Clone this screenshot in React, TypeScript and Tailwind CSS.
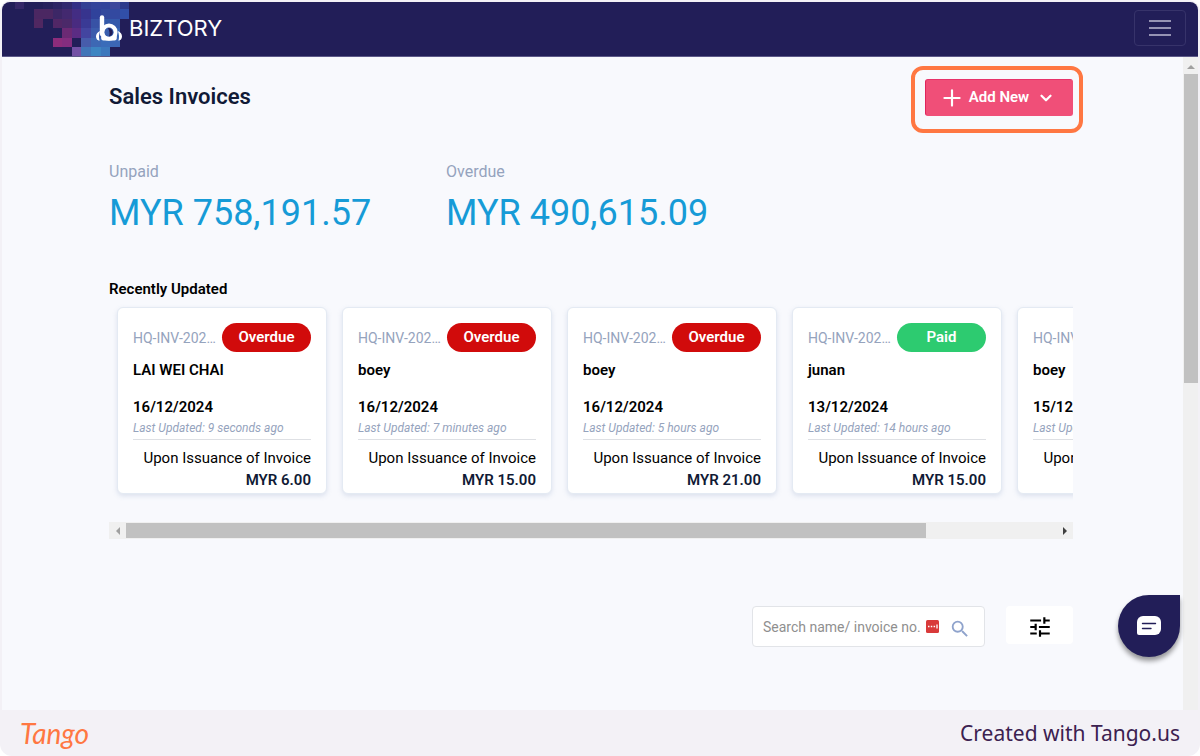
import { ChevronDown, Plus } from "lucide-react";
import { MdSearch, MdTune } from "react-icons/md";

type Invoice = {
  number: string;
  status: "Overdue" | "Paid";
  customer: string;
  date: string;
  updated: string;
  amount: string;
};

const invoices: Invoice[] = [
  { number: "HQ-INV-202412-0012", status: "Overdue", customer: "LAI WEI CHAI", date: "16/12/2024", updated: "9 seconds ago", amount: "MYR 6.00" },
  { number: "HQ-INV-202412-0011", status: "Overdue", customer: "boey", date: "16/12/2024", updated: "7 minutes ago", amount: "MYR 15.00" },
  { number: "HQ-INV-202412-0010", status: "Overdue", customer: "boey", date: "16/12/2024", updated: "5 hours ago", amount: "MYR 21.00" },
  { number: "HQ-INV-202412-0009", status: "Paid", customer: "junan", date: "13/12/2024", updated: "14 hours ago", amount: "MYR 15.00" },
  { number: "HQ-INV-202412-0008", status: "Paid", customer: "boey", date: "15/12/2024", updated: "15 hours ago", amount: "MYR 15.00" },
];

// [column, row, colour] of each square in the header mosaic
const mosaic: [number, number, string][] = [
  [1, 0, "#352767"], [4, 0, "#26205c"], [5, 0, "#2c2364"], [6, 0, "#31286e"], [7, 0, "#332e85"], [8, 0, "#333f94"], [9, 0, "#34439a"], [10, 0, "#32439a"], [11, 0, "#3d479c"], [12, 0, "#2c3a8c"],
  [3, 1, "#4b2762"], [4, 1, "#4b2762"], [5, 1, "#3c2766"], [6, 1, "#43296f"], [7, 1, "#432d83"], [8, 1, "#37348e"], [9, 1, "#30429b"], [10, 1, "#33499d"], [11, 1, "#3349a0"], [12, 1, "#314fa8"],
  [3, 2, "#502761"], [5, 2, "#512766"], [6, 2, "#4b2969"], [7, 2, "#492b80"], [8, 2, "#3a3a95"], [9, 2, "#3852a5"], [10, 2, "#3459a8"], [11, 2, "#3459ab"],
  [6, 3, "#6b2a74"], [7, 3, "#5b2c83"], [8, 3, "#4345a0"], [9, 3, "#3c5cac"], [10, 3, "#3561b0"], [11, 3, "#3564b4"],
  [5, 4, "#8c2c7b"], [6, 4, "#832d7f"], [8, 4, "#475cab"], [9, 4, "#3d68b4"], [10, 4, "#3a6cb9"], [11, 4, "#3c66b5"],
  [7, 5, "#7351a5"], [8, 5, "#4175b8"], [9, 5, "#3d85c2"], [10, 5, "#3c78bd"],
];

function Mosaic() {
  return (
    <svg
      className="absolute left-0 top-0 h-full w-[130px]"
      viewBox="2 2 130 54"
      preserveAspectRatio="xMinYMin slice"
      shapeRendering="crispEdges"
      aria-hidden="true"
    >
      {mosaic.map(([col, row, fill]) => (
        <rect key={`${col}-${row}`} x={5 + col * 9.56} y={-0.5 + row * 9.56} width="9.7" height="9.7" fill={fill} />
      ))}
    </svg>
  );
}

function BiztoryMark() {
  return (
    <svg className="h-7 w-7" viewBox="0 0 28 28" fill="none" aria-hidden="true">
      <path d="M5.200 17C2.400 18 1 20 1 22.500c0 2.300 1.400 4 3.600 4.300C3.600 24 3.800 20 5.200 17z" fill="#fff" />
      <path d="M22.800 17c2.800 1 4.200 3 4.200 5.500 0 2.300-1.400 4-3.600 4.300 1-2.800.8-6.800-.6-9.800z" fill="#fff" />
      <path d="M7 3.500V20" stroke="#fff" strokeWidth="4.400" strokeLinecap="round" />
      <circle cx="14" cy="18.200" r="6.600" stroke="#fff" strokeWidth="4" />
      <path d="M7 20c-1.400 3-1.200 6.500 1.500 6.500h11c2.700 0 2.900-3.500 1.500-6.500l-3 2.500h-8z" fill="#fff" />
      <circle cx="14" cy="18.200" r="4.200" fill="#3a5fae" />
      <path d="M13 14a4.200 4.200 0 0 1 1 8.400c1-2.800.6-5.400-1-8.400z" fill="#221e58" />
    </svg>
  );
}

function InvoiceCard({ invoice }: { invoice: Invoice }) {
  return (
    <li className="h-[187px] w-[210px] shrink-0 rounded-md border border-[#e4eaf3] bg-white px-[15px] pt-[15px] text-[15px] leading-[22px] text-black shadow-[0_2px_5px_rgba(120,140,180,0.22)]">
      <div className="flex items-center gap-[3px]">
        <span className="min-w-0 flex-1 truncate text-sm text-[#95a3bd]">{invoice.number}</span>
        <span
          className={`w-[89px] shrink-0 rounded-full text-center font-semibold leading-[29px] text-white ${
            invoice.status === "Paid" ? "bg-[#2dcb70]" : "bg-[#d10b0b]"
          }`}
        >
          {invoice.status}
        </span>
      </div>
      <p className="mt-[7px] font-semibold">{invoice.customer}</p>
      <p className="mt-[15px] font-semibold">{invoice.date}</p>
      <p className="border-b border-[#dee0e4] text-xs italic leading-[21px] text-[#95a3bd]">Last Updated: {invoice.updated}</p>
      <p className="mt-[7px] text-right">Upon Issuance of Invoice</p>
      <p className="text-right font-semibold text-[#101a35]">{invoice.amount}</p>
    </li>
  );
}

function Stat({ label, amount }: { label: string; amount: string }) {
  return (
    <div className="w-[337px]">
      <p className="text-base leading-6 text-[#95a3bd]">{label}</p>
      <p className="mt-1 text-4xl leading-[50px] text-[#169bd7]">{amount}</p>
    </div>
  );
}

export default function App() {
  return (
    <div className="flex min-h-screen flex-col overflow-hidden rounded-xl bg-[#f3f1f6] px-0.5 pt-0.5 font-['Roboto',sans-serif]">
      <header className="relative flex h-[55px] items-center justify-between overflow-hidden rounded-t-lg border-b border-[#5d5989] bg-[#221e58] pb-0.5 pl-[93px] pr-3">
        <Mosaic />
        <a href="#" className="relative flex items-center gap-1.5 text-white" aria-label="BIZTORY">
          <BiztoryMark />
          <span className="font-['Inter',sans-serif] text-[22px] leading-7">BIZTORY</span>
        </a>
        <button type="button" aria-label="Menu" className="flex h-9 w-[52px] flex-col items-center justify-center gap-[5px] rounded border border-[#37336a]">
          <span className="h-0.5 w-[22px] bg-[#9693b4]" />
          <span className="h-0.5 w-[22px] bg-[#9693b4]" />
          <span className="h-0.5 w-[22px] bg-[#9693b4]" />
        </button>
      </header>

      <div className="flex flex-1 bg-[#f8f9fd]">
        <main className="min-w-0 flex-1 pl-[107px] pr-[110px]">
          <div className="flex items-start justify-between">
            <h1 className="mt-6 text-[22px] font-semibold leading-8 text-[#111a36]">Sales Invoices</h1>
            <div className="-mr-2.5 mt-[9px] rounded-xl border-4 border-[#ff7742] pb-[13px] pl-2.5 pr-1.5 pt-[9px]">
              <button type="button" className="flex h-[37px] w-[148px] items-center justify-center gap-1 rounded-[3px] border border-[#f04f78] border-l-[#e0245c] border-t-[#e8336a] bg-[#f04f78] pr-1 text-[15px] font-semibold text-white">
                <Plus size={26} strokeWidth={2} />
                Add New
                <ChevronDown size={18} strokeWidth={3} className="ml-1" />
              </button>
            </div>
          </div>

          <section className="mt-[27px] flex">
            <Stat label="Unpaid" amount="MYR 758,191.57" />
            <Stat label="Overdue" amount="MYR 490,615.09" />
          </section>

          <section className="mt-10">
            <h2 className="text-[15px] font-semibold leading-[22px] text-black">Recently Updated</h2>
            <ul className="flex gap-[15px] overflow-hidden px-2 pb-7 pt-[7px]">
              {invoices.map((invoice) => (
                <InvoiceCard key={invoice.number} invoice={invoice} />
              ))}
            </ul>
            <div className="flex h-[17px] items-center bg-[#f0f0f0]" aria-hidden="true">
              <svg className="h-2 w-[17px]" viewBox="0 0 17 8"><path d="M11 0v8L7 4z" fill="#a0a0a0" /></svg>
              <div className="flex-1">
                <div className="h-[15px] w-[86%] bg-[#c1c1c1]" />
              </div>
              <svg className="h-2 w-[17px]" viewBox="0 0 17 8"><path d="M7 0v8l4-4z" fill="#404040" /></svg>
            </div>
          </section>

          <form className="mt-[67px] flex items-start justify-end gap-[21px]" onSubmit={(e) => e.preventDefault()}>
            <div className="flex h-[41px] w-[233px] items-center rounded border border-[#e2e4e8] bg-white pl-2.5 pr-[13px]">
              <input
                type="text"
                aria-label="Search name or invoice number"
                placeholder="Search name/ invoice no."
                className="w-[163px] text-sm text-black outline-none placeholder:text-[#8f8f8f]"
              />
              <svg className="h-[13px] w-[13px] shrink-0" viewBox="0 0 13 13" aria-hidden="true">
                <rect width="13" height="13" rx="1.500" fill="#d93a3a" />
                <path d="M2 6.500h1.500M4.800 6.500h1.500M7.600 6.500h1.500M11 4.500v4" stroke="#fff" strokeWidth="1.300" />
              </svg>
              <button type="submit" aria-label="Search" className="ml-auto pt-1 text-[#8fa3cc]">
                <MdSearch size={22} />
              </button>
            </div>
            <button type="button" aria-label="Filters" className="flex h-[38px] w-[67px] items-center justify-center rounded bg-white pt-1 text-black">
              <MdTune size={26} />
            </button>
          </form>
        </main>

        <div className="flex w-[15px] flex-col items-center bg-[#f0f0f0]" aria-hidden="true">
          <svg className="h-[17px] w-[15px]" viewBox="0 0 15 17"><path d="M4 12h8l-4-4z" fill="#a0a0a0" /></svg>
          <div className="h-[309px] w-[14px] bg-[#c1c1c1]" />
        </div>
      </div>

      <footer className="flex h-[46px] items-center justify-between px-[18px] text-[#3c2150]">
        <a href="#" className="font-['Lato',sans-serif] text-[28px] italic leading-8 text-[#ff7742]">Tango</a>
        <p className="font-['Noto_Sans',sans-serif] text-[21px] leading-8">Created with Tango.us</p>
      </footer>

      <button type="button" aria-label="Open chat" className="fixed bottom-[99px] right-5 flex h-[62px] w-[62px] items-center justify-center rounded-full rounded-tr-md bg-[#221e58] shadow-[0_4px_5px_rgba(0,0,0,0.4)]">
        <svg className="h-5 w-6" viewBox="0 0 24 20" fill="none" aria-hidden="true">
          <path d="M6 0h12a6 6 0 0 1 6 6v7a6 6 0 0 1-6 6H2a2 2 0 0 1-2-2V6a6 6 0 0 1 6-6z" fill="#fff" />
          <path d="M5.500 7.500h13M5.500 12.500h8.500" stroke="#221e58" strokeWidth="1.400" strokeLinecap="round" />
        </svg>
      </button>
    </div>
  );
}
